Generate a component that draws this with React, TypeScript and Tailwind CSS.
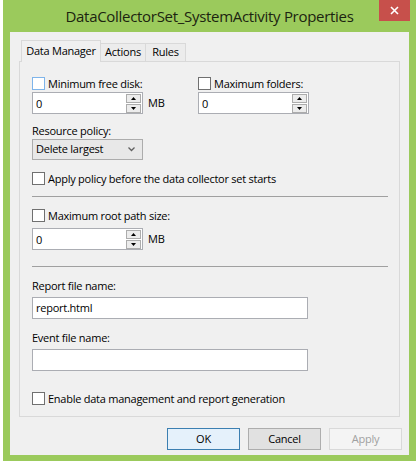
import React from 'react';

const ui = "font-['Open_Sans','Noto_Sans',sans-serif] text-[11px] tracking-[-0.25px] text-black";

function Check({ label, focus }: { label: string; focus?: boolean }) {
  return (
    <div className="flex h-[15px] items-center gap-[3px]">
      <span
        className={
          focus
            ? 'h-[13px] w-[13px] border border-[#7eb4ea] bg-white'
            : 'h-[13px] w-[13px] border border-[#707070] bg-white'
        }
      />
      <span className="leading-none">{label}</span>
    </div>
  );
}

function Arrow({ up }: { up?: boolean }) {
  return (
    <svg width="5" height="3" viewBox="0 0 5 3">
      {up ? <path d="M0 3 L2.5 0 L5 3 Z" fill="#000" /> : <path d="M0 0 L2.5 3 L5 0 Z" fill="#000" />}
    </svg>
  );
}

function Spin() {
  return (
    <div className="flex h-[22px] w-[111px] items-center border border-[#abadb3] bg-white">
      <span className="pl-[3px] leading-none">0</span>
      <div className="ml-auto mr-[1px] flex flex-col gap-[1px]">
        <div className="flex h-[9px] w-[15px] items-center justify-center border border-[#acacac] bg-[#ececec]">
          <Arrow up />
        </div>
        <div className="flex h-[9px] w-[15px] items-center justify-center border border-[#acacac] bg-[#ececec]">
          <Arrow />
        </div>
      </div>
    </div>
  );
}

function Btn({ label, kind }: { label: string; kind: 'default' | 'normal' | 'disabled' }) {
  const cls =
    kind === 'default'
      ? 'border-[#3c7fb1] bg-[#e5f1fb] text-black'
      : kind === 'normal'
      ? 'border-[#adadad] bg-[#e1e1e1] text-black'
      : 'border-[#d9d9d9] bg-[#f4f4f4] text-[#a0a0a0]';
  return (
    <div className={`flex h-[22px] w-[73px] items-center justify-center border ${cls}`}>
      {label}
    </div>
  );
}

export default function App() {
  return (
    <div className="h-[464px] w-[419px] bg-white pl-[3px]">
      <div className={`flex h-[461px] w-[413px] flex-col bg-[#9bca5c] ${ui}`}>
        <div className="relative flex h-[32px] items-center justify-center">
          <span className="text-[15px] tracking-[-0.3px] text-[#1c2410]">
            DataCollectorSet_SystemActivity Properties
          </span>
          <div className="absolute right-[6px] top-0 flex h-[21px] w-[31px] items-center justify-center bg-[#c7504b]">
            <svg width="9" height="9" viewBox="0 0 9 9">
              <path d="M1 1 L8 8 M8 1 L1 8" stroke="#fff" strokeWidth="1.6" />
            </svg>
          </div>
        </div>

        <div className="mx-[7px] flex h-[423px] flex-col bg-[#f0f0f0]">
          {/* tabs */}
          <div className="ml-[11px] mt-[8px] flex h-[21px] items-end">
            <div className="relative z-10 -mb-px flex h-[22px] w-[80px] items-center justify-center border border-b-0 border-[#d9d9d9] bg-[#f0f0f0]">
              Data Manager
            </div>
            <div className="flex h-[18px] w-[45px] items-center justify-center border border-l-0 border-b-0 border-[#d9d9d9] bg-[#ececec]">
              Actions
            </div>
            <div className="flex h-[18px] w-[40px] items-center justify-center border border-l-0 border-b-0 border-[#d9d9d9] bg-[#ececec]">
              Rules
            </div>
          </div>

          {/* page */}
          <div className="ml-[9px] mr-[9px] flex h-[356px] flex-col border border-[#d9d9d9] pl-[12px] pr-[11px] pt-[14px]">
            <div className="flex">
              <div className="flex w-[166px] flex-col">
                <Check label="Minimum free disk:" focus />
                <div className="mt-[1px] flex items-center gap-[5px]">
                  <Spin />
                  <span>MB</span>
                </div>
              </div>
              <div className="flex flex-col">
                <Check label="Maximum folders:" />
                <div className="mt-[1px]">
                  <Spin />
                </div>
              </div>
            </div>

            <div className="mt-[10px] flex h-[15px] items-center">Resource policy:</div>
            <div className="flex h-[21px] w-[111px] items-center justify-between border border-[#acacac] bg-[#e8e8e8] pl-[3px] pr-[7px]">
              <span>Delete largest</span>
              <svg width="7" height="5" viewBox="0 0 7 5">
                <path d="M0.5 0.5 L3.5 3.5 L6.5 0.5" stroke="#606060" strokeWidth="1.3" fill="none" />
              </svg>
            </div>

            <div className="mt-[11px]">
              <Check label="Apply policy before the data collector set starts" />
            </div>

            <div className="mt-[10px] h-px bg-[#a0a0a0]" />

            <div className="mt-[11px]">
              <Check label="Maximum root path size:" />
            </div>
            <div className="mt-[5px] flex items-center gap-[5px]">
              <Spin />
              <span>MB</span>
            </div>

            <div className="mt-[16px] h-px bg-[#a0a0a0]" />

            <div className="mt-[12px] flex h-[15px] items-center">Report file name:</div>
            <div className="mt-[3px] flex h-[22px] w-[276px] items-center border border-[#abadb3] bg-white pl-[3px]">
              report.html
            </div>

            <div className="mt-[12px] flex h-[15px] items-center">Event file name:</div>
            <div className="mt-[3px] h-[22px] w-[276px] border border-[#abadb3] bg-white" />

            <div className="mt-[20px]">
              <Check label="Enable data management and report generation" />
            </div>
          </div>

          {/* buttons */}
          <div className="mr-[7px] mt-[11px] flex justify-end gap-[8px]">
            <Btn label="OK" kind="default" />
            <Btn label="Cancel" kind="normal" />
            <Btn label="Apply" kind="disabled" />
          </div>
        </div>
      </div>
    </div>
  );
}
